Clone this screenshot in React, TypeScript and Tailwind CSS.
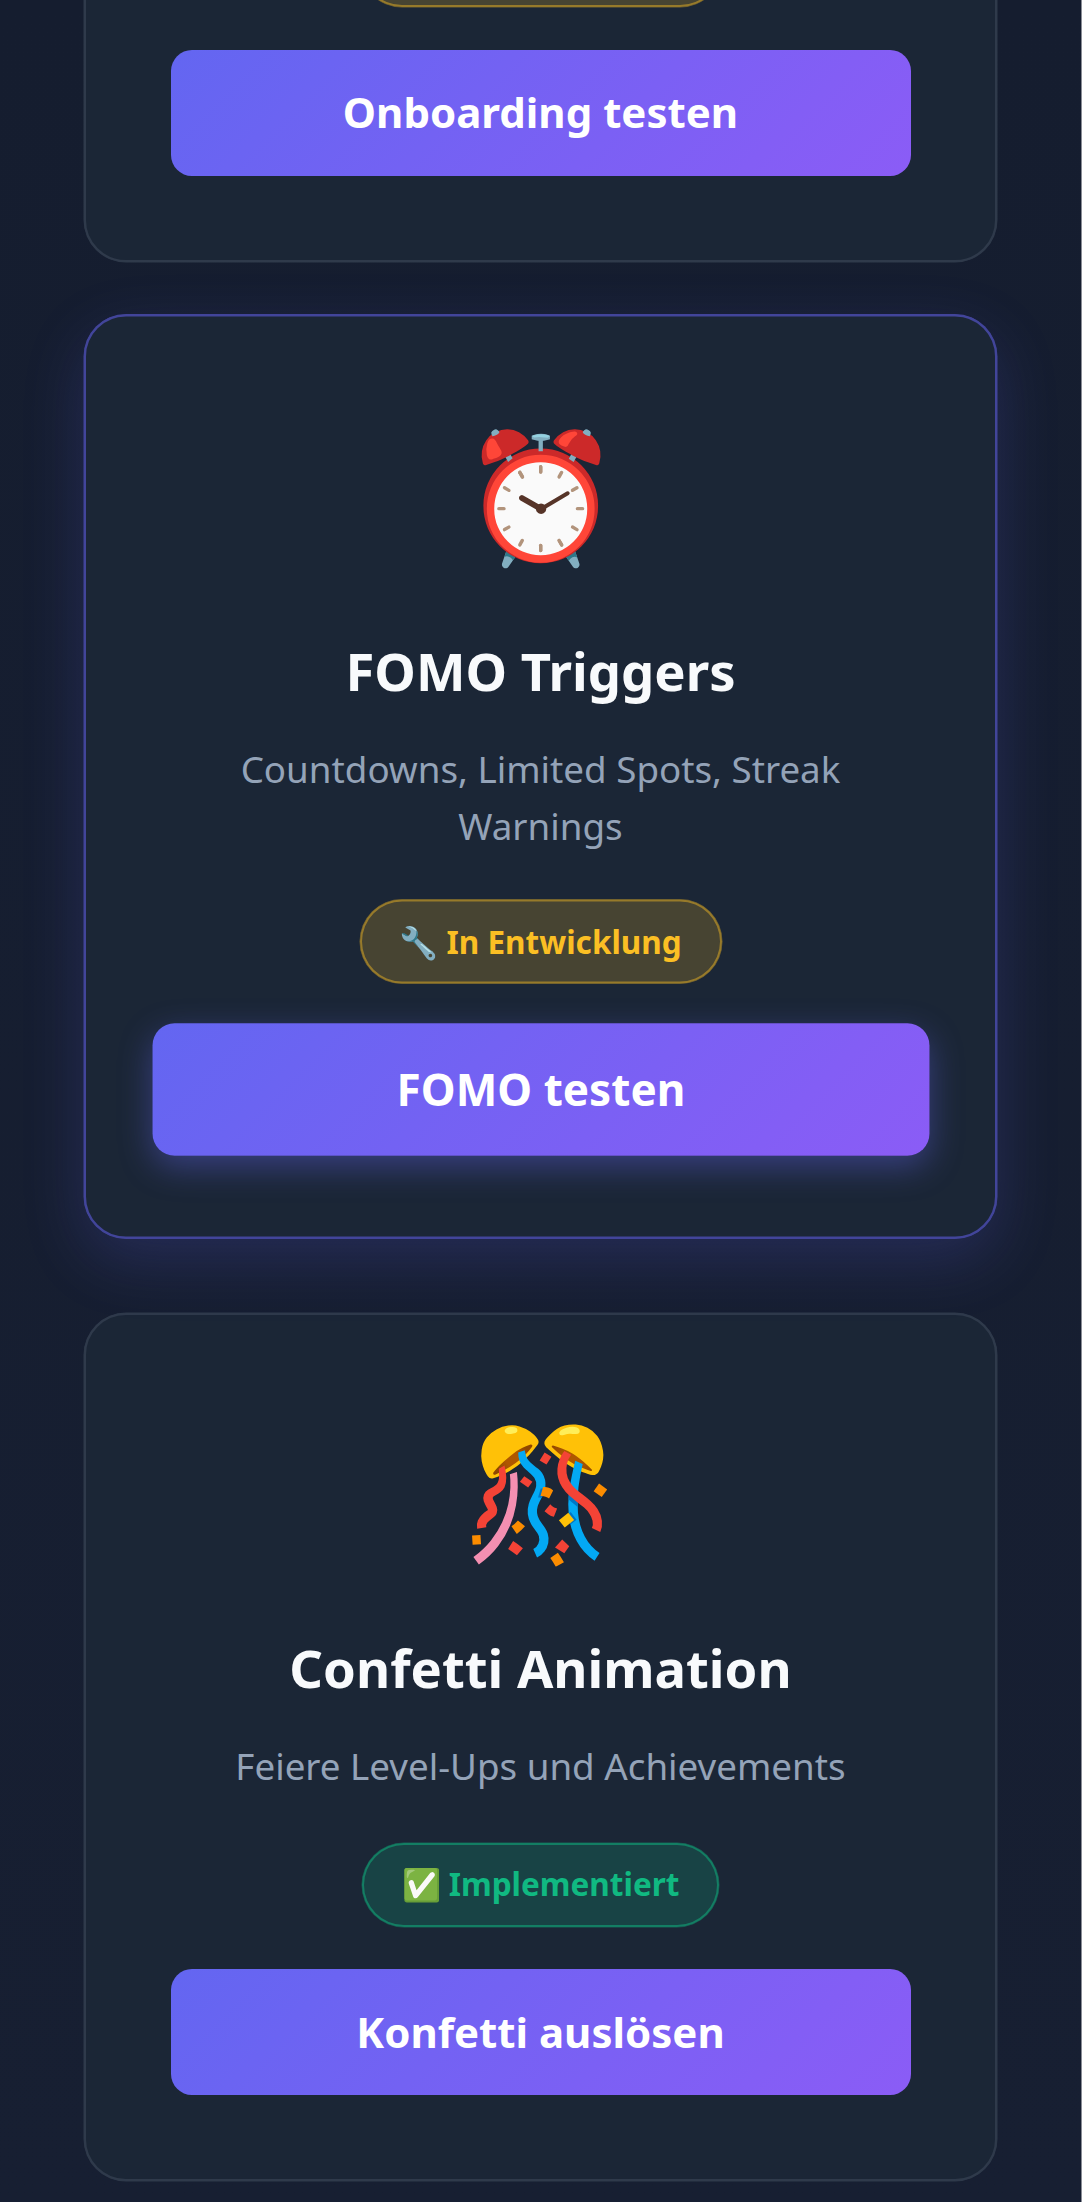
import type { ReactNode } from "react";

function Badge({ children, done }: { children?: ReactNode; done?: boolean }) {
  return (
    <span
      className={
        "inline-flex h-[84px] shrink-0 items-center justify-center rounded-full border-2 pb-[2px] text-[31.5px] font-bold whitespace-pre " +
        (done
          ? "w-[357px] border-[#10b981]/50 bg-[#10b981]/20 text-[#10b981] shadow-[0_0_0_0.5px_rgba(16,185,129,0.4)]"
          : "w-[362px] border-[#fbbf24]/45 bg-[#fbbf24]/20 text-[#fbbf24] shadow-[0_0_0_0.5px_rgba(251,191,36,0.4)]")
      }
    >
      {children}
    </span>
  );
}

function ActionButton({ children, hovered }: { children: ReactNode; hovered?: boolean }) {
  return (
    <button
      className={
        "mt-[42.2px] h-[126.4px] w-full shrink-0 rounded-[21px] bg-[linear-gradient(135deg,#6366f1,#8b5cf6)] pb-[2px] text-[42px] font-bold text-white " +
        (hovered ? "scale-105 shadow-[0_10.5px_31.5px_rgba(99,102,241,0.4)]" : "")
      }
    >
      {children}
    </button>
  );
}

function Card({ children, hovered }: { children: ReactNode; hovered?: boolean }) {
  return (
    <section
      className={
        "flex w-full shrink-0 flex-col items-center rounded-[42px] border-2 bg-[#1b2636] px-[84.5px] py-[84px] text-center " +
        (hovered
          ? "-translate-y-[10.5px] border-[#42459a] shadow-[0_0_0_0.5px_#42459a,0_21px_63px_rgba(99,102,241,0.2)]"
          : "border-[#2f3a4b] shadow-[0_0_0_0.5px_#2f3a4b]")
      }
    >
      {children}
    </section>
  );
}

function Intro({ icon, title, children, spacing }: { icon: string; title: string; children: ReactNode; spacing: string }) {
  return (
    <>
      <div className="mb-[49px] flex h-[181.6px] items-center text-[127px] leading-none">{icon}</div>
      <h3 className="mb-[30.1px] text-[52.6px] leading-[78.75px] font-bold text-[#f8fafc]">{title}</h3>
      <p className={"text-[36.75px] leading-[56.7px] text-[#94a3b8] " + spacing}>{children}</p>
    </>
  );
}

export default function App() {
  return (
    <div className="flex h-[2202px] w-[1082px] flex-col justify-end overflow-hidden border-r border-[#8a8d96] bg-[linear-gradient(180deg,#151d2f,#171f32)] pr-[84px] pb-[20.7px] pl-[84px] font-['Noto_Sans',sans-serif]">
      <main className="flex w-[913px] flex-col gap-[63.5px]">
        <Card>
          <Badge />
          <ActionButton>Onboarding testen</ActionButton>
        </Card>
        <Card hovered>
          <Intro icon="⏰" title="FOMO Triggers" spacing="mb-[46.1px]">
            Countdowns, Limited Spots, Streak Warnings
          </Intro>
          <Badge>🔧 In Entwicklung</Badge>
          <ActionButton hovered>FOMO testen</ActionButton>
        </Card>
        <Card>
          <Intro icon="🎊" title="Confetti Animation" spacing="mb-[48.1px]">
            Feiere Level-Ups und Achievements
          </Intro>
          <Badge done>✅ Implementiert</Badge>
          <ActionButton>Konfetti auslösen</ActionButton>
        </Card>
      </main>
    </div>
  );
}
